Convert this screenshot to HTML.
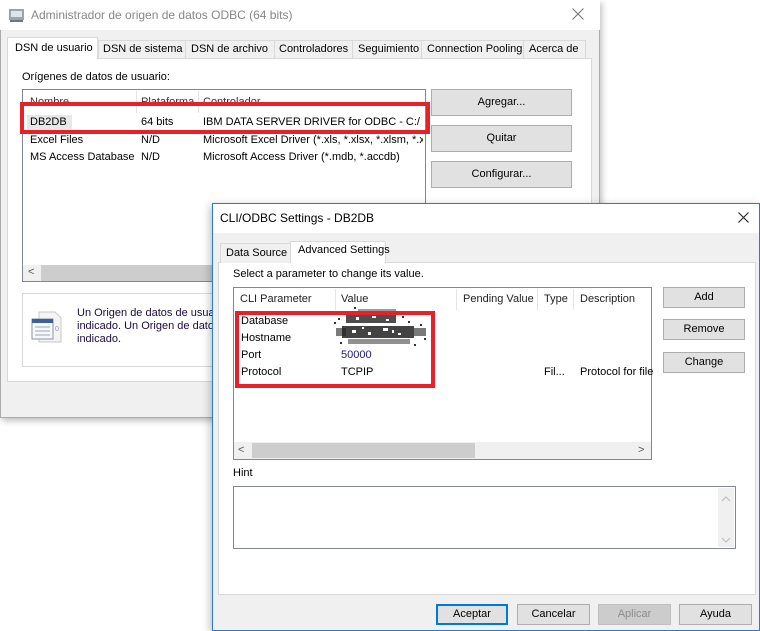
<!DOCTYPE html>
<html><head><meta charset="utf-8"><style>
*{box-sizing:border-box;margin:0;padding:0}
body{width:760px;height:631px;overflow:hidden;background:#fff;font-family:"Liberation Sans",sans-serif;font-size:11px;color:#000;position:relative}
.a{position:absolute}
.btn{position:absolute;background:#e1e1e1;border:1px solid #adadad;text-align:center;font-size:11px}
.t{position:absolute;white-space:nowrap}
</style></head><body>

<!-- back window -->
<div class="a" style="left:0;top:0;width:600px;height:418px;background:#f0f0f0;border:1px solid #aaa;box-shadow:2px 3px 6px rgba(0,0,0,.25)"></div>
<div class="a" style="left:0;top:0;width:600px;height:30px;background:#fff"></div>
<svg class="a" style="left:8px;top:7px" width="18" height="16"><rect x="1" y="2" width="15" height="11" fill="#9aa4ad"/><rect x="3" y="4" width="11" height="6" fill="#dfe5ea"/><rect x="2" y="13" width="13" height="2" fill="#6d7780"/></svg>
<div class="t" style="left:31px;top:8px;color:#888;font-size:12px">Administrador de origen de datos ODBC (64 bits)</div>
<svg class="a" style="left:572px;top:8px" width="12" height="12"><path d="M0.5 0.5L11.5 11.5M11.5 0.5L0.5 11.5" stroke="#777" stroke-width="1.1"/></svg>

<!-- tab panel -->
<div class="a" style="left:7px;top:58px;width:585px;height:324px;background:#fff;border:1px solid #d9d9d9"></div>
<div class="a" style="left:7px;top:37px;width:91px;height:22px;background:#fff;border:1px solid #d9d9d9;border-bottom:none"></div>
<div class="t" style="left:15px;top:42px">DSN de usuario</div>
<div class="a" style="left:98px;top:40px;width:488px;height:18px;border:1px solid #d9d9d9;border-bottom:none;background:#f0f0f0"></div>
<div class="a" style="left:185px;top:40px;width:1px;height:18px;background:#d9d9d9"></div>
<div class="a" style="left:274px;top:40px;width:1px;height:18px;background:#d9d9d9"></div>
<div class="a" style="left:352px;top:40px;width:1px;height:18px;background:#d9d9d9"></div>
<div class="a" style="left:421px;top:40px;width:1px;height:18px;background:#d9d9d9"></div>
<div class="a" style="left:523px;top:40px;width:1px;height:18px;background:#d9d9d9"></div>
<div class="t" style="left:103px;top:43px">DSN de sistema</div>
<div class="t" style="left:191px;top:43px">DSN de archivo</div>
<div class="t" style="left:279px;top:43px">Controladores</div>
<div class="t" style="left:358px;top:43px">Seguimiento</div>
<div class="t" style="left:427px;top:43px">Connection Pooling</div>
<div class="t" style="left:529px;top:43px">Acerca de</div>

<div class="t" style="left:22px;top:71px">Orígenes de datos de usuario:</div>
<div class="a" style="left:22px;top:89px;width:404px;height:193px;border:1px solid #828790;background:#fff"></div>
<div class="t" style="left:30px;top:96px;color:#333">Nombre</div>
<div class="t" style="left:141px;top:96px;color:#333">Plataforma</div>
<div class="t" style="left:203px;top:96px;color:#333">Controlador</div>
<div class="a" style="left:136px;top:91px;width:1px;height:22px;background:#e5e5e5"></div>
<div class="a" style="left:198px;top:91px;width:1px;height:22px;background:#e5e5e5"></div>
<div class="a" style="left:27px;top:115px;width:45px;height:16px;background:#e8e8e8"></div>
<div class="t" style="left:30px;top:116px">DB2DB</div>
<div class="t" style="left:141px;top:116px">64 bits</div>
<div class="t" style="left:203px;top:116px">IBM DATA SERVER DRIVER for ODBC - C:/</div>
<div class="t" style="left:30px;top:134px">Excel Files</div>
<div class="t" style="left:141px;top:134px">N/D</div>
<div class="t" style="left:203px;top:134px;width:220px;overflow:hidden">Microsoft Excel Driver (*.xls, *.xlsx, *.xlsm, *.xlsb)</div>
<div class="t" style="left:30px;top:151px">MS Access Database</div>
<div class="t" style="left:141px;top:151px">N/D</div>
<div class="t" style="left:203px;top:151px">Microsoft Access Driver (*.mdb, *.accdb)</div>
<div class="a" style="left:20px;top:102px;width:410px;height:32px;border:4px solid #e8202a"></div>
<div class="a" style="left:23px;top:265px;width:402px;height:16px;background:#f0f0f0"></div>
<div class="a" style="left:41px;top:265px;width:180px;height:16px;background:#cdcdcd"></div>
<div class="t" style="left:28px;top:266px;color:#555">&lt;</div>

<div class="btn" style="left:431px;top:89px;width:141px;height:27px;line-height:25px">Agregar...</div>
<div class="btn" style="left:431px;top:125px;width:141px;height:27px;line-height:25px">Quitar</div>
<div class="btn" style="left:431px;top:161px;width:141px;height:27px;line-height:25px">Configurar...</div>

<div class="a" style="left:22px;top:293px;width:200px;height:74px;border:1px solid #d9d9d9;border-right:none;background:#fff"></div>
<svg class="a" style="left:31px;top:311px" width="32" height="32"><path d="M8 1h16l6 6v24H8z" fill="#f4f4f4" stroke="#c8c8c8"/><rect x="1" y="8" width="21" height="20" fill="#f8f8f8" stroke="#8a96a8"/><rect x="1" y="8" width="21" height="4" fill="#3b5f9a"/><g stroke="#9aa6b8"><line x1="4" y1="16" x2="19" y2="16"/><line x1="4" y1="20" x2="19" y2="20"/><line x1="4" y1="24" x2="19" y2="24"/></g><text x="24" y="20" font-size="7" fill="#999" font-family="Liberation Sans">0</text></svg>
<div class="t" style="left:77px;top:307px;color:#1a0a40">Un Origen de datos de usuario</div>
<div class="t" style="left:77px;top:320px;color:#1a0a40">indicado. Un Origen de datos</div>
<div class="t" style="left:77px;top:333px;color:#1a0a40">indicado.</div>

<!-- front dialog -->
<div class="a" style="left:212px;top:203px;width:548px;height:428px;background:#f0f0f0;border:1px solid #2b7ad0;box-shadow:-2px 2px 8px rgba(0,0,0,.25)"></div>
<div class="a" style="left:213px;top:204px;width:546px;height:29px;background:#fff"></div>
<div class="t" style="left:220px;top:211px;font-size:12px">CLI/ODBC Settings - DB2DB</div>
<svg class="a" style="left:738px;top:212px" width="11" height="11"><path d="M0.5 0.5L10.5 10.5M10.5 0.5L0.5 10.5" stroke="#222" stroke-width="1.1"/></svg>

<div class="a" style="left:218px;top:262px;width:538px;height:333px;background:#fff;border:1px solid #d9d9d9"></div>
<div class="a" style="left:220px;top:243px;width:71px;height:20px;border:1px solid #d9d9d9;border-bottom:none;background:#f0f0f0"></div>
<div class="t" style="left:226px;top:247px">Data Source</div>
<div class="a" style="left:290px;top:241px;width:96px;height:22px;border:1px solid #d9d9d9;border-bottom:none;background:#fff"></div>
<div class="t" style="left:298px;top:244px">Advanced Settings</div>

<div class="t" style="left:233px;top:268px">Select a parameter to change its value.</div>
<div class="a" style="left:233px;top:287px;width:419px;height:173px;border:1px solid #828790;background:#fff"></div>
<div class="a" style="left:335px;top:289px;width:1px;height:21px;background:#e5e5e5"></div>
<div class="a" style="left:456px;top:289px;width:1px;height:21px;background:#e5e5e5"></div>
<div class="a" style="left:537px;top:289px;width:1px;height:21px;background:#e5e5e5"></div>
<div class="a" style="left:573px;top:289px;width:1px;height:21px;background:#e5e5e5"></div>
<div class="t" style="left:240px;top:293px;color:#222">CLI Parameter</div>
<div class="t" style="left:341px;top:293px;color:#222">Value</div>
<div class="t" style="left:463px;top:293px;color:#222">Pending Value</div>
<div class="t" style="left:544px;top:293px;color:#222">Type</div>
<div class="t" style="left:580px;top:293px;color:#222">Description</div>
<div class="t" style="left:241px;top:315px">Database</div>
<div class="t" style="left:241px;top:332px">Hostname</div>
<div class="t" style="left:241px;top:349px">Port</div>
<div class="t" style="left:241px;top:366px">Protocol</div>
<div class="t" style="left:341px;top:349px;color:#1a1a80">50000</div>
<div class="t" style="left:341px;top:366px">TCPIP</div>
<div class="t" style="left:544px;top:366px">Fil...</div>
<div class="t" style="left:580px;top:366px">Protocol for file</div>
<svg class="a" style="left:328px;top:306px" width="104" height="44">
<g fill="#222">
<rect x="18" y="8" width="50" height="9" opacity=".8"/><rect x="14" y="20" width="72" height="12" opacity=".85"/>
<rect x="8" y="22" width="10" height="8" opacity=".6"/><rect x="86" y="22" width="12" height="8" opacity=".6"/>
<rect x="30" y="3" width="38" height="4" opacity=".45"/><rect x="20" y="33" width="62" height="5" opacity=".5"/>
</g>
<g fill="#fff">
<rect x="28" y="11" width="3" height="3"/><rect x="44" y="10" width="4" height="2"/><rect x="58" y="13" width="3" height="2"/>
<rect x="24" y="24" width="4" height="3"/><rect x="40" y="26" width="3" height="3"/><rect x="55" y="22" width="5" height="3"/>
<rect x="70" y="27" width="3" height="2"/><rect x="34" y="21" width="2" height="2"/><rect x="64" y="24" width="2" height="3"/>
</g>
<g fill="#333">
<rect x="6" y="16" width="2" height="2"/><rect x="10" y="12" width="2" height="2"/><rect x="74" y="10" width="2" height="2"/>
<rect x="80" y="15" width="2" height="2"/><rect x="92" y="18" width="2" height="2"/><rect x="96" y="32" width="2" height="2"/>
<rect x="12" y="36" width="2" height="2"/><rect x="86" y="38" width="2" height="2"/><rect x="26" y="1" width="2" height="2"/>
</g>
</svg>
<div class="a" style="left:235px;top:311px;width:200px;height:77px;border:4px solid #e8202a"></div>
<div class="a" style="left:234px;top:442px;width:417px;height:17px;background:#f0f0f0"></div>
<div class="a" style="left:252px;top:443px;width:223px;height:15px;background:#cdcdcd"></div>
<div class="t" style="left:238px;top:444px;color:#555">&lt;</div>
<div class="t" style="left:638px;top:444px;color:#555">&gt;</div>

<div class="btn" style="left:663px;top:287px;width:82px;height:21px;line-height:19px">Add</div>
<div class="btn" style="left:663px;top:319px;width:82px;height:21px;line-height:19px">Remove</div>
<div class="btn" style="left:663px;top:352px;width:82px;height:21px;line-height:19px">Change</div>

<div class="t" style="left:233px;top:467px">Hint</div>
<div class="a" style="left:233px;top:486px;width:503px;height:63px;border:1px solid #828790;background:#fff"></div>
<div class="a" style="left:718px;top:488px;width:16px;height:59px;background:#f0f0f0"></div>
<svg class="a" style="left:721px;top:496px" width="10" height="6"><path d="M1 5L5 1L9 5" fill="none" stroke="#bbb"/></svg>
<svg class="a" style="left:721px;top:537px" width="10" height="6"><path d="M1 1L5 5L9 1" fill="none" stroke="#bbb"/></svg>

<div class="btn" style="left:436px;top:604px;width:72px;height:21px;line-height:17px;border:2px solid #0078d7">Aceptar</div>
<div class="btn" style="left:517px;top:604px;width:73px;height:21px;line-height:19px">Cancelar</div>
<div class="btn" style="left:598px;top:604px;width:73px;height:21px;line-height:19px;background:#ccc;border-color:#bfbfbf;color:#8d8d8d">Aplicar</div>
<div class="btn" style="left:679px;top:604px;width:73px;height:21px;line-height:19px">Ayuda</div>
</body></html>
